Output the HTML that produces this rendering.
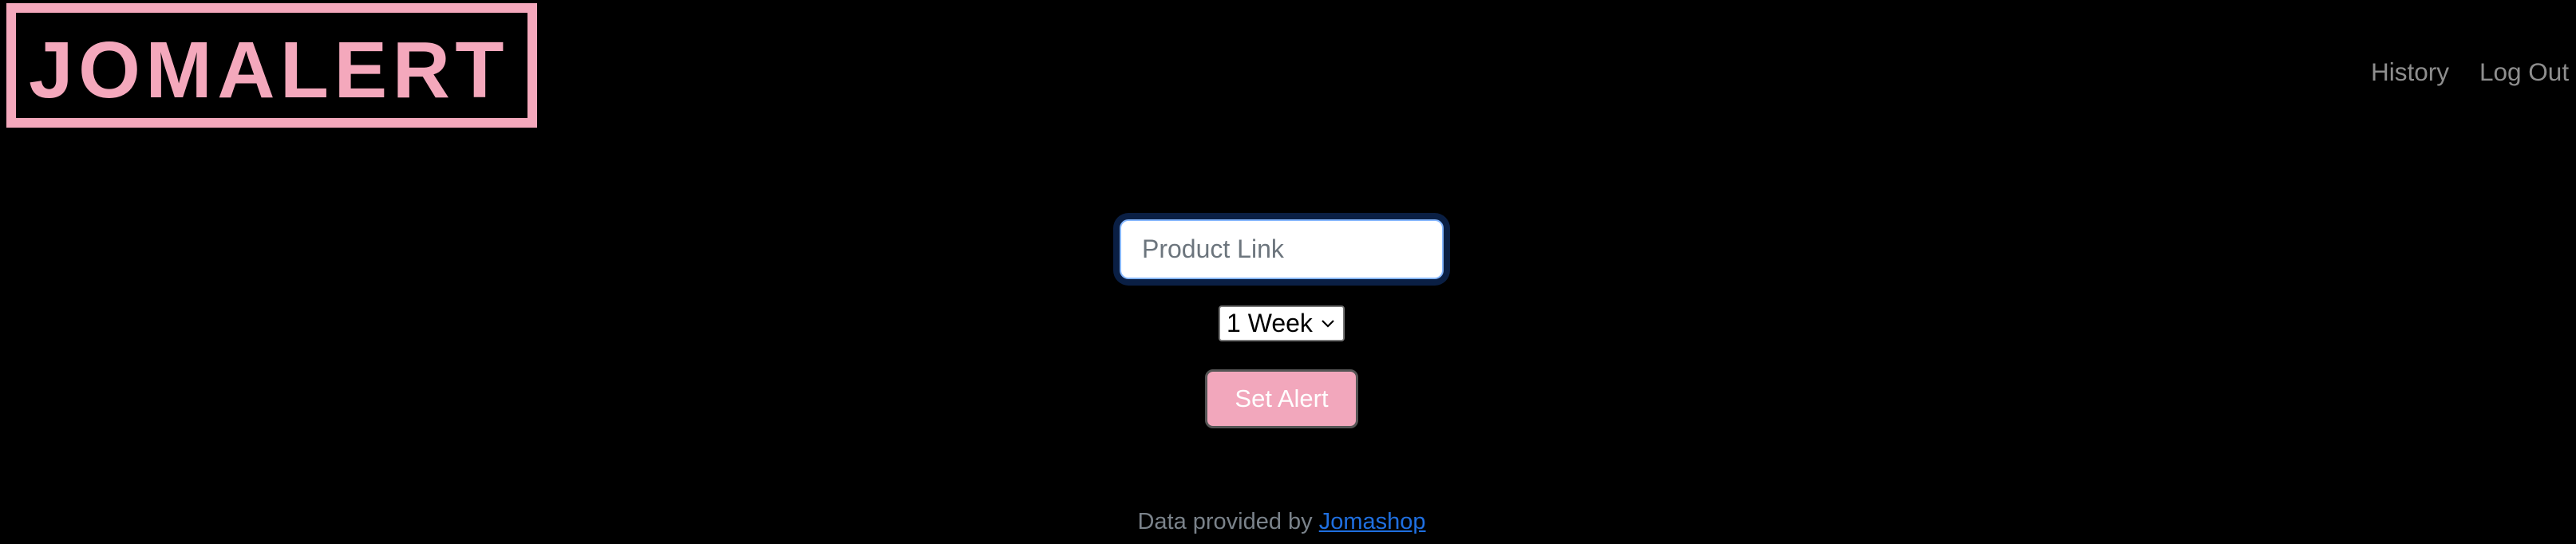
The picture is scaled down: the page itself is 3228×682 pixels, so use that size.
<!DOCTYPE html>
<html><head><meta charset="utf-8"><style>
html,body{margin:0;padding:0;background:#000;width:3228px;height:682px;overflow:hidden;font-family:"Liberation Sans",sans-serif;position:relative}
.logo{position:absolute;left:8px;top:4px;width:641px;height:132px;border:12px solid #f4a8bc;}
.logo span{position:absolute;left:16px;top:22px;font-weight:bold;font-size:100px;line-height:100px;color:#f4a8bc;letter-spacing:6.5px;}
.nav{position:absolute;top:71px;font-size:31.5px;color:#8e8e8e;line-height:38px}
.inp{position:absolute;left:1403px;top:275px;width:406px;height:75px;box-sizing:border-box;border:2px solid #86b7fe;border-radius:11px;background:#fff;font-size:32px;color:#6c757d;line-height:71px;padding-left:26px;box-shadow:0 0 0 8px #0a1f44}
.sel{position:absolute;left:1527px;top:383px;width:158px;height:45px;box-sizing:border-box;border:2px solid #777;border-radius:4px;background:#fff;font-size:32px;line-height:41px;color:#000;padding-left:8px}
.sel svg{position:absolute;right:10px;top:15px}
.btn{position:absolute;left:1510px;top:463px;width:192px;height:74px;box-sizing:border-box;border:3px solid #555;border-radius:10px;background:#f2a7bc;color:#fff;font-size:31px;text-align:center;line-height:68px}
.foot{position:absolute;left:0;width:3212px;top:637px;text-align:center;font-size:29px;color:#7a828a;line-height:34px}
.foot a{color:#1f6fe0;text-decoration:underline}
</style></head><body>
<div class="logo"><span>JOMALERT</span></div>
<div class="nav" style="left:2971px">History</div>
<div class="nav" style="left:3107px">Log Out</div>
<div class="inp">Product Link</div>
<div class="sel">1 Week<svg width="18" height="12" viewBox="0 0 18 12"><path d="M2 2 L9 9 L16 2" fill="none" stroke="#000" stroke-width="2.2"/></svg></div>
<div class="btn">Set Alert</div>
<div class="foot">Data provided by <a>Jomashop</a></div>
</body></html>
